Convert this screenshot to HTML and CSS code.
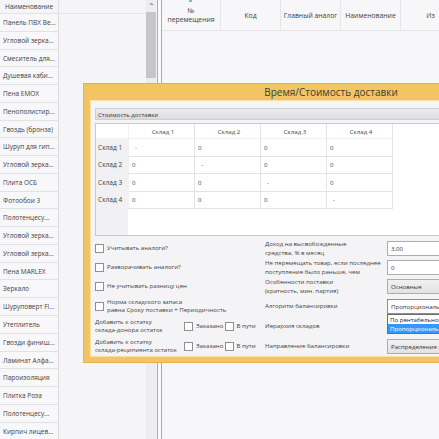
FILE: index.html
```html
<!DOCTYPE html>
<html lang="ru">
<head>
  <meta charset="UTF-8">
  <meta name="viewport" content="width=device-width, initial-scale=1.0">
  <title>Перемещения</title>
  <link rel="stylesheet" href="styles.css">
</head>

<body>
  <div class="app">
    <!-- Goods list -->
    <div class="goods">
      <div class="goods-head"><div class="goods-title">Наименование</div></div>
      <div class="goods-rows">
        <div class="goods-cell">Панель ПВХ Ве...</div>
        <div class="goods-cell">Угловой зерка...</div>
        <div class="goods-cell">Смеситель для...</div>
        <div class="goods-cell">Душевая каби...</div>
        <div class="goods-cell">Пена EMOX</div>
        <div class="goods-cell">Пенополистир...</div>
        <div class="goods-cell">Гвоздь (бронза)</div>
        <div class="goods-cell">Шуруп для гип...</div>
        <div class="goods-cell">Угловой зерка...</div>
        <div class="goods-cell">Плита ОСБ</div>
        <div class="goods-cell">Фотообои 3</div>
        <div class="goods-cell">Полотенцесу...</div>
        <div class="goods-cell">Угловой зерка...</div>
        <div class="goods-cell">Угловой зерка...</div>
        <div class="goods-cell">Пена MARLEX</div>
        <div class="goods-cell">Зеркало</div>
        <div class="goods-cell">Шуруповерт Fl...</div>
        <div class="goods-cell">Утеплитель</div>
        <div class="goods-cell">Гвозди финиш...</div>
        <div class="goods-cell">Ламинат Алфа...</div>
        <div class="goods-cell">Пароизоляция</div>
        <div class="goods-cell">Плитка Роза</div>
        <div class="goods-cell">Полотенцесу...</div>
        <div class="goods-cell">Кирпич лицев...</div>
      </div>
    </div>

    <div class="scrollbar">
      <div class="scroll-up">&#8963;</div>
      <div class="scroll-thumb"></div>
    </div>
    <div class="splitter"></div>

    <!-- Moves grid -->
    <div class="moves">
      <div class="moves-head">
        <div class="col col-num"><span class="sort-mark"></span>№<br>перемещения</div>
        <div class="col">Код</div>
        <div class="col">Главный аналог</div>
        <div class="col">Наименование</div>
        <div class="col">Из</div>
      </div>
    </div>
  </div>

  <!-- Delivery time / cost window -->
  <div class="dialog">
    <div class="dialog-title">Время/Стоимость доставки</div>
    <div class="dialog-body">
      <div class="section-bar">Стоимость доставки</div>

      <div class="matrix">
        <table>
          <tr>
            <th class="corner"></th>
            <th>Склад 1</th>
            <th>Склад 2</th>
            <th>Склад 3</th>
            <th>Склад 4</th>
          </tr>
          <tr>
            <td class="row-name">Склад 1</td>
            <td class="dash">-</td><td>0</td><td>0</td><td>0</td>
          </tr>
          <tr>
            <td class="row-name">Склад 2</td>
            <td>0</td><td class="dash">-</td><td>0</td><td>0</td>
          </tr>
          <tr>
            <td class="row-name">Склад 3</td>
            <td>0</td><td>0</td><td class="dash">-</td><td>0</td>
          </tr>
          <tr>
            <td class="row-name">Склад 4</td>
            <td>0</td><td>0</td><td>0</td><td class="dash">-</td>
          </tr>
        </table>
      </div>

      <div class="options">
        <label class="check"><span class="box"></span>Учитывать аналоги?</label>
        <div class="field-label">Доход на высвобожденные<br>средства, % в месяц</div>
        <div class="field">3,00</div>

        <label class="check"><span class="box"></span>Разворачивать аналоги?</label>
        <div class="field-label">Не перемещать товар, если последнее<br>поступление было раньше, чем</div>
        <div class="field">0</div>

        <label class="check"><span class="box"></span>Не учитывать разницу цен</label>
        <div class="field-label">Особенности поставки<br>(кратность, мин. партия)</div>
        <div class="field combo">Основные</div>

        <label class="check"><span class="box"></span>Норма складского запаса<br>равна Сроку поставки + Периодичность</label>
        <div class="field-label">Алгоритм балансировки</div>
        <div class="field-wrap">
          <div class="field focused">Пропорционально</div>
          <div class="dropdown">
            <div class="dropdown-item">По рентабельности</div>
            <div class="dropdown-item selected">Пропорционально</div>
          </div>
        </div>

        <div class="remainder">
          <div class="remainder-label">Добавить к остатку<br>склада-донора остаток</div>
          <label class="check small"><span class="box"></span>Заказано</label>
          <label class="check small"><span class="box"></span>В пути</label>
        </div>
        <div class="field-label">Иерархия складов</div>
        <div class="field combo">Многоуровневая</div>

        <div class="remainder">
          <div class="remainder-label">Добавить к остатку<br>склада-реципиента остаток</div>
          <label class="check small"><span class="box"></span>Заказано</label>
          <label class="check small"><span class="box"></span>В пути</label>
        </div>
        <div class="field-label">Направление балансировки</div>
        <div class="field combo">Распределение товара</div>
      </div>
    </div>
  </div>
</body>

</html>
```

FILE: styles.css
```css
body {
  margin: 0;
  width: 439px;
  height: 439px;
  overflow: hidden;
  position: relative;
  font-family: "Open Sans", "Noto Sans", sans-serif;
  font-size: 6.5px;
  color: #3e3e3e;
  background-color: #f5f5f7;
}

.app {
  display: flex;
  height: 439px;
}

/* Goods list */
.goods {
  width: 146px;
  flex: none;
}

.goods-head {
  height: 14px;
  border-bottom: 1px solid #e4e4e6;
  box-sizing: border-box;
}

.goods-title {
  width: 59px;
  height: 13px;
  line-height: 13px;
  text-align: center;
  border-right: 1px solid #e0e0e2;
  box-sizing: border-box;
}

.goods-cell {
  width: 59px;
  height: 17.78px;
  line-height: 17px;
  padding-left: 3px;
  box-sizing: border-box;
  background-color: #f8f8fa;
  border-right: 1px solid #d9d9db;
  border-bottom: 1px solid #e2e2e4;
  white-space: nowrap;
  overflow: hidden;
}

.scrollbar {
  width: 10px;
  flex: none;
  background-color: #ededef;
  display: flex;
  flex-direction: column;
  align-items: center;
}

.scroll-up {
  height: 12px;
  line-height: 12px;
  font-size: 8px;
  color: #555;
}

.scroll-thumb {
  width: 10px;
  height: 66px;
  background-color: #c6c6c8;
}

.splitter {
  width: 3px;
  flex: none;
  margin-left: 1px;
  border-left: 1px solid #a9a9ab;
  border-right: 1px solid #a9a9ab;
  background-color: #fbfbfb;
}

.moves {
  flex: 1;
  background-color: #f7f7f9;
}

.moves-head {
  display: flex;
  height: 31px;
  border-bottom: 1px solid #e4e4e6;
  box-sizing: border-box;
  font-size: 6.8px;
}

.col {
  width: 59px;
  flex: none;
  display: flex;
  align-items: center;
  justify-content: center;
  text-align: center;
  line-height: 9px;
  border-right: 1px solid #e6e6e8;
  position: relative;
}

.col-num {
  width: 58px;
}

.sort-mark {
  position: absolute;
  top: 0;
  left: 27px;
  width: 3px;
  height: 2px;
  background-color: #7cc4c4;
}

/* Dialog window */
.dialog {
  position: absolute;
  left: 83px;
  top: 83px;
  width: 496px;
  height: 280px;
  background-color: #f2c462;
  border: 1px solid #e2b24c;
  box-sizing: border-box;
  display: flex;
  flex-direction: column;
  padding: 0 6px 6px 6px;
  font-size: 6.1px;
}

.dialog-title {
  height: 16px;
  line-height: 17px;
  text-align: center;
  font-size: 10px;
  color: #3c3c3c;
}

.dialog-body {
  flex: 1;
  background-color: #f4f4f6;
  border: 1px solid #f7e0a8;
  padding: 7px 4px 0 4px;
}

.section-bar {
  height: 12px;
  line-height: 11px;
  padding-left: 2px;
  box-sizing: border-box;
  border: 1px solid #cfcfd1;
  background: linear-gradient(#ececee, #dcdcde);
  color: #333;
}

.matrix {
  margin-top: 3px;
  height: 113px;
  box-sizing: border-box;
  border: 1px solid #c9c9cb;
  background: linear-gradient(to right, #f1f1f3 32px, #fff 32px);
}

.matrix table {
  border-collapse: collapse;
  table-layout: fixed;
}

.matrix th,
.matrix td {
  width: 59px;
  padding: 0 0 0 3px;
  text-align: left;
  font-weight: normal;
  border: 1px solid #e4e4e6;
  border-top: none;
  white-space: nowrap;
}

.matrix th {
  height: 14px;
  text-align: center;
  background-color: #fff;
  border-bottom-color: #f0f0f2;
}

.matrix td {
  height: 16.5px;
  background-color: #fff;
}

.matrix .corner,
.matrix .row-name {
  width: 29px;
  border-left: none;
  background-color: #f1f1f3;
  border-color: #f1f1f3;
  font-size: 6.6px;
}

.matrix .corner {
  background-color: #fff;
}

.matrix .row-name {
  padding-left: 2px;
}

.matrix .dash {
  padding-left: 6px;
}

/* Options */
.options {
  margin-top: 3px;
  display: grid;
  grid-template-columns: 170px 122px 1fr;
  grid-template-rows: 19px 19px 19px 20px 20px 20px;
  align-items: center;
}

.check {
  display: flex;
  align-items: center;
  gap: 3px;
  line-height: 8.5px;
}

.box {
  width: 7px;
  height: 7px;
  flex: none;
  border: 1px solid #8e8f8f;
  background-color: #fff;
}

.remainder {
  display: flex;
  align-items: center;
}

.remainder-label {
  width: 89px;
  line-height: 8.5px;
  flex: none;
}

.check.small {
  width: 45px;
}

.field-label {
  line-height: 8.5px;
}

.field-wrap {
  position: relative;
}

.field {
  height: 15px;
  line-height: 14px;
  padding-left: 3px;
  box-sizing: border-box;
  border: 1px solid #acadb0;
  background-color: #fff;
  white-space: nowrap;
  overflow: hidden;
  color: #333;
}

.field.combo {
  background: linear-gradient(#f1f1f1, #e2e2e2);
}

.field.focused {
  border-color: #5b9ad8;
}

.dropdown {
  position: absolute;
  top: 15px;
  left: 0;
  right: 0;
  background-color: #fff;
  border: 1px solid #6d6d6d;
  z-index: 2;
}

.dropdown-item {
  height: 9px;
  line-height: 9px;
  padding-left: 2px;
  color: #222;
  white-space: nowrap;
}

.dropdown-item.selected {
  background-color: #3399ff;
  color: #fff;
}
```
